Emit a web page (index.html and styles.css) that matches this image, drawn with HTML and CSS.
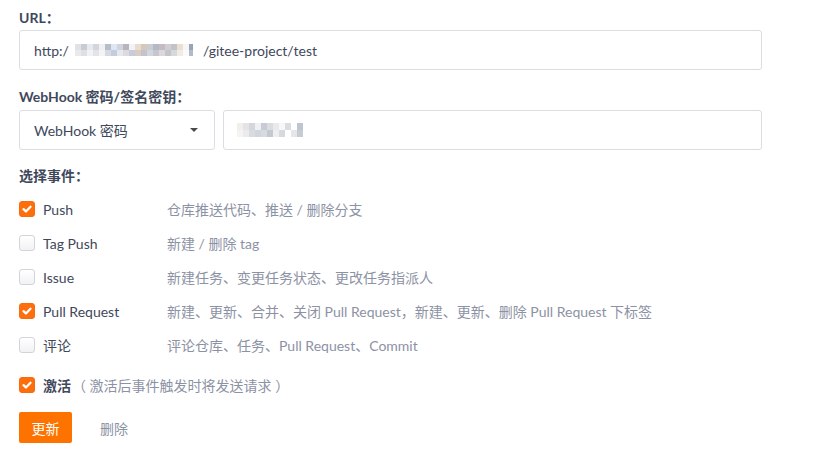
FILE: index.html
```html
<!DOCTYPE html>
<html lang="zh-CN">
<head>
<meta charset="utf-8">
<title>WebHook</title>
<link rel="stylesheet" href="styles.css">
</head>
<body>
<form class="form">
  <div class="field field-url">
    <label class="field-label">URL<span class="colon">：</span></label>
    <div class="input">
      <span>http:/</span><span class="mosaic mosaic-url"></span><span>/gitee-project/test</span>
    </div>
  </div>

  <div class="field field-secret">
    <label class="field-label">WebHook 密码/签名密钥<span class="colon">：</span></label>
    <div class="pair">
      <div class="input select">
        <span>WebHook 密码</span>
        <span class="caret"></span>
      </div>
      <div class="input grow">
        <span class="mosaic mosaic-pwd"></span>
      </div>
    </div>
  </div>

  <div class="field events">
    <label class="field-label">选择事件<span class="colon">：</span></label>
    <ul class="event-list">
      <li class="event">
        <span class="check on"><svg viewBox="0 0 16 16"><path d="M4 8.2l2.8 2.6L12 5.4"/></svg></span>
        <span class="event-name">Push</span>
        <span class="event-desc">仓库推送代码、推送 / 删除分支</span>
      </li>
      <li class="event">
        <span class="check"></span>
        <span class="event-name">Tag Push</span>
        <span class="event-desc">新建 / 删除 tag</span>
      </li>
      <li class="event">
        <span class="check"></span>
        <span class="event-name">Issue</span>
        <span class="event-desc">新建任务、变更任务状态、更改任务指派人</span>
      </li>
      <li class="event">
        <span class="check on"><svg viewBox="0 0 16 16"><path d="M4 8.2l2.8 2.6L12 5.4"/></svg></span>
        <span class="event-name">Pull Request</span>
        <span class="event-desc">新建、更新、合并、关闭 Pull Request，新建、更新、删除 Pull Request 下标签</span>
      </li>
      <li class="event">
        <span class="check"></span>
        <span class="event-name">评论</span>
        <span class="event-desc">评论仓库、任务、Pull Request、Commit</span>
      </li>
    </ul>
  </div>

  <div class="active">
    <span class="check on"><svg viewBox="0 0 16 16"><path d="M4 8.2l2.8 2.6L12 5.4"/></svg></span>
    <span class="active-name">激活</span>
    <span class="active-hint">（ 激活后事件触发时将发送请求 ）</span>
  </div>

  <div class="actions">
    <button type="button" class="btn-primary">更新</button>
    <button type="button" class="btn-link">删除</button>
  </div>
</form>
</body>
</html>
```

FILE: styles.css
```css
* { box-sizing: border-box; }
html, body { margin: 0; padding: 0; background: #fff; }
body {
  font-family: Lato, "Noto Sans CJK SC", sans-serif;
  font-size: 14px;
  color: #40485b;
}
.form {
  width: 762px;
  padding: 7px 0 0 19px;
}
.field { margin-bottom: 17px; }
.field-url { margin-bottom: 16px; }
.field-secret { margin-bottom: 15px; }
.field-label {
  display: block;
  font-weight: bold;
  line-height: 20px;
  margin-bottom: 3px;
  color: #40485b;
}
.field-url .field-label { margin-bottom: 2px; }
.field-secret .field-label { margin-bottom: 3px; }
.colon { font-family: "Noto Sans CJK TC", sans-serif; }
.input {
  height: 40px;
  border: 1px solid #dcdde3;
  border-radius: 3px;
  display: flex;
  align-items: center;
  padding: 0 14px;
  color: #40485b;
  background: #fff;
}
.pair { display: flex; gap: 8px; }
.select { width: 196px; justify-content: space-between; padding-right: 16px; }
.grow { flex: 1; padding-left: 13px; }
.caret {
  width: 0; height: 0;
  border-left: 4px solid transparent;
  border-right: 4px solid transparent;
  border-top: 4px solid #4a4a4a;
}
.mosaic { display: inline-block; }
.mosaic-url {
  width: 134px; height: 12px;
  background:
    linear-gradient(90deg, #fff 0 6px, #e0e2e8 6px 12px, #c9ccd3 12px 18px, #e6e9ef 18px 24px, #d5d6dc 24px 30px, #f0f0f2 30px 36px, #b8bdc8 36px 42px, #dde6f2 42px 48px, #cfd5df 48px 54px, #b9b4bd 54px 60px, #f3f3f5 60px 66px, #e6dcd2 66px 72px, #dac8b6 72px 78px, #c8ccd5 78px 84px, #b5b9c6 84px 90px, #c4bcc2 90px 96px, #d1cdd3 96px 102px, #c2c3c6 102px 108px, #eadfd3 108px 114px, #f6f6f6 114px 120px, #9aa3b3 120px 124px, #fff 124px) top / 100% 6px no-repeat,
    linear-gradient(90deg, #fff 0 6px, #e8eaee 6px 12px, #dfe0e5 12px 18px, #f1f2f5 18px 24px, #e3e4e8 24px 30px, #f4f4f6 30px 36px, #d6dae2 36px 42px, #c2cde0 42px 48px, #e6e8ee 48px 54px, #dcd9df 54px 60px, #c7ccd8 60px 66px, #d9cdc2 66px 72px, #bfc4cf 72px 78px, #d3d6dd 78px 84px, #c7c6cc 84px 90px, #dbd7dc 90px 96px, #c4c5cb 96px 102px, #d7d8dc 102px 108px, #f0ebe6 108px 114px, #fafafa 114px 120px, #b4bac6 120px 124px, #fff 124px) bottom / 100% 6px no-repeat;
}
.mosaic-pwd {
  width: 66px; height: 14px;
  background:
    linear-gradient(90deg, #f3eee8 0 6px, #e3e4e8 6px 12px, #d5d6db 12px 18px, #eef0f3 18px 24px, #c7cbd6 24px 30px, #dadce1 30px 36px, #e7e9ed 36px 42px, #f7f7f8 42px 48px, #d9dce1 48px 54px, #fff 54px 60px, #bfc5cf 60px 66px) top / 100% 7px no-repeat,
    linear-gradient(90deg, #f6f4f1 0 6px, #e9ebee 6px 12px, #dadbe0 12px 18px, #d1d5dd 18px 24px, #d7dae1 24px 30px, #c3c8d1 30px 36px, #eceef1 36px 42px, #d7d9de 42px 48px, #fff 48px 54px, #e4e6ea 54px 60px, #c6ccd5 60px 66px) bottom / 100% 7px no-repeat;
}
.events { margin-bottom: 6px; }
.events .field-label { margin-bottom: 6px; }
.event-list { list-style: none; margin: 0; padding: 0; }
.event {
  height: 34px;
  display: flex;
  align-items: center;
}
.check {
  flex: none;
  width: 16px; height: 16px;
  border: 1px solid #d2d4da;
  border-radius: 3px;
  background: linear-gradient(#ffffff, #f1f2f4);
  display: inline-flex;
  align-items: center;
  justify-content: center;
}
.check.on {
  border-color: #fa6b0e;
  background: #fc6f0c;
}
.check svg { width: 16px; height: 16px; }
.check path {
  fill: none;
  stroke: #fff;
  stroke-width: 2.6;
  stroke-linecap: round;
  stroke-linejoin: round;
}
.event-name {
  width: 124px;
  margin-left: 8px;
  color: #40485b;
}
.event-desc { color: #8c92a4; }
.active {
  height: 34px;
  display: flex;
  align-items: center;
  margin-bottom: 10px;
}
.active-name { margin-left: 8px; font-weight: bold; color: #40485b; }
.active-hint { color: #8c92a4; margin-left: 1px; }
.actions { display: flex; align-items: center; }
.btn-primary {
  font: inherit;
  height: 31px;
  width: 53px;
  border: none;
  border-radius: 2px;
  background: #fe7300;
  color: #fff;
  padding: 0;
  cursor: pointer;
}
.btn-link {
  font: inherit;
  border: none;
  background: none;
  color: #8c92a4;
  padding: 0;
  margin-left: 28px;
}
```
